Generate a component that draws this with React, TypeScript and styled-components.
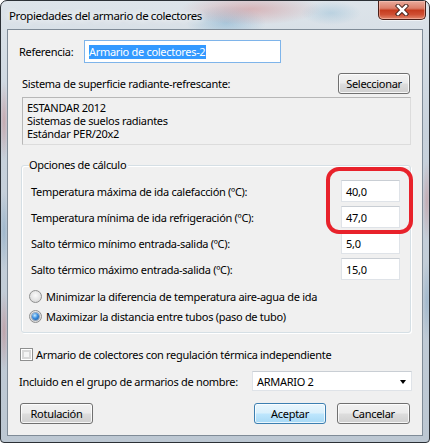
import React from 'react';
import styled, { createGlobalStyle, css } from 'styled-components';

const FONT = '"Noto Sans", "Open Sans", sans-serif';
const FS = '11px';
const LS = '-0.3px';

const Global = createGlobalStyle`
  html, body { margin: 0; padding: 0; background: #ffffff; }
  body {
    width: 430px; height: 443px; overflow: hidden;
    font-family: ${FONT};
    font-size: ${FS};
    letter-spacing: ${LS};
    color: #000;
  }
  * { box-sizing: border-box; }
`;

const Window = styled.div`
  position: relative;
  width: 430px;
  height: 443px;
  border: 1px solid #2b3036;
  border-radius: 7px 7px 4px 4px;
  padding: 0 6px 6px 6px;
  display: flex;
  flex-direction: column;
  background:
    radial-gradient(ellipse 70px 16px at 250px 8px, rgba(205, 95, 95, 0.35), transparent),
    radial-gradient(ellipse 40px 18px at 225px 22px, rgba(80, 150, 195, 0.35), transparent),
    radial-gradient(ellipse 30px 12px at 330px 12px, rgba(90, 160, 200, 0.25), transparent),
    radial-gradient(ellipse 5px 40px at 3px 120px, rgba(190, 90, 90, 0.35), transparent),
    radial-gradient(ellipse 5px 40px at 3px 230px, rgba(90, 140, 180, 0.35), transparent),
    radial-gradient(ellipse 5px 40px at 3px 330px, rgba(190, 90, 90, 0.35), transparent),
    radial-gradient(ellipse 5px 40px at 426px 200px, rgba(190, 90, 90, 0.3), transparent),
    radial-gradient(ellipse 5px 40px at 426px 300px, rgba(90, 140, 180, 0.3), transparent),
    linear-gradient(180deg, #dde4ea 0%, #c8d2dc 30%, #bcc7d2 100%);
`;

const TitleBar = styled.div`
  height: 28px;
  display: flex;
  align-items: flex-start;
  justify-content: space-between;
  padding-left: 2px;
`;

const Title = styled.div`
  font-family: ${FONT};
  font-size: 11.5px;
  letter-spacing: -0.4px;
  line-height: 16px;
  margin-top: 7px;
  color: #000;
  text-shadow: 0 0 6px rgba(255, 255, 255, 0.95), 0 0 10px rgba(255, 255, 255, 0.8);
`;

const CloseButton = styled.div`
  width: 48px;
  height: 19px;
  margin-right: -3px;
  border: 1px solid #4a1f18;
  border-top: none;
  border-radius: 0 0 5px 5px;
  box-shadow: 0 1px 0 rgba(255, 255, 255, 0.6), inset 0 0 0 1px rgba(255, 210, 200, 0.45);
  background: linear-gradient(180deg, #e9ab9c 0%, #dc7f6a 40%, #c53c1f 52%, #cf4f33 75%, #e2876c 100%);
  display: flex;
  align-items: center;
  justify-content: center;
`;

const Client = styled.div`
  flex: 1;
  background: #f0f0f0;
  border: 1px solid #7f8b97;
  display: flex;
  flex-direction: column;
  position: relative;
`;

const Label = styled.span<{ $w?: number }>`
  font-family: ${FONT};
  font-size: ${FS};
  letter-spacing: ${LS};
  white-space: nowrap;
  ${(p) => p.$w !== undefined && css`width: ${p.$w}px; flex: none;`}
`;

const RefRow = styled.div`
  display: flex;
  align-items: center;
  margin-top: 10px;
  padding-left: 11px;
  height: 23px;
`;

const TextBox = styled.div<{ $focus?: boolean; $w: number; $h?: number }>`
  width: ${(p) => p.$w}px;
  height: ${(p) => p.$h ?? 22}px;
  background: #fff;
  border: 1px solid ${(p) => (p.$focus ? '#7eb4ea' : '#dfe3e8')};
  ${(p) => !p.$focus && css`border-top-color: #c9ced4;`}
  display: flex;
  align-items: center;
  padding-left: 4px;
  font-family: ${FONT};
  font-size: ${FS};
  flex: none;
`;

const Selected = styled.span`
  background: #3399ff;
  color: #fff;
  line-height: 14px;
  padding: 0 1px 0 0;
`;

const SistemaRow = styled.div`
  display: flex;
  align-items: center;
  justify-content: space-between;
  margin-top: 10px;
  padding: 0 12px 0 14px;
  height: 21px;
`;

const Button = styled.div<{ $default?: boolean; $w: number }>`
  width: ${(p) => p.$w}px;
  height: 21px;
  flex: none;
  border-radius: 3px;
  border: 1px solid ${(p) => (p.$default ? '#3c7fb1' : '#707070')};
  box-shadow: inset 0 0 0 1px ${(p) => (p.$default ? 'rgba(255,255,255,0.75)' : 'rgba(255,255,255,0.8)')};
  background: ${(p) =>
    p.$default
      ? 'linear-gradient(180deg, #eaf6fd 0%, #d9f0fc 48%, #bee6fd 52%, #a7d9f5 100%)'
      : 'linear-gradient(180deg, #f2f2f2 0%, #ebebeb 48%, #dddddd 52%, #cfcfcf 100%)'};
  display: flex;
  align-items: center;
  justify-content: center;
  font-family: ${FONT};
  font-size: ${FS};
  color: #000;
`;

const InfoBox = styled.div`
  margin: 3px 11px 0 14px;
  height: 48px;
  border: 1px solid #b7b7b7;
  border-right-color: #dcdcdc;
  border-bottom-color: #dcdcdc;
  padding: 3px 4px;
  display: flex;
  flex-direction: column;
`;

const InfoLine = styled.div`
  font-family: ${FONT};
  font-size: ${FS};
  line-height: 13px;
  white-space: nowrap;
`;

const Group = styled.div`
  margin: 20px 11px 0 13px;
  height: 168px;
  border: 1px solid #d5dfe5;
  border-radius: 3px;
  box-shadow: inset 1px 1px 0 #ffffff, 1px 1px 0 #ffffff;
  display: flex;
  flex-direction: column;
  padding: 0 10px 0 7px;
`;

const Legend = styled.div`
  align-self: flex-start;
  margin-top: -9px;
  padding: 0 2px 0 0;
  background: #f0f0f0;
  font-family: ${FONT};
  font-size: ${FS};
  line-height: 16px;
`;

const ValueRows = styled.div`
  display: flex;
  flex-direction: column;
  gap: 4px;
  margin-top: 7px;
`;

const ValueRow = styled.div`
  display: flex;
  align-items: center;
  justify-content: space-between;
  height: 22px;
  padding-left: 2px;
`;

const Options = styled.div`
  display: flex;
  flex-direction: column;
  gap: 7px;
  margin-top: 10px;
`;

const OptionRow = styled.div`
  display: flex;
  align-items: center;
  gap: 4px;
  height: 13px;
`;

const Radio = styled.span<{ $checked?: boolean }>`
  width: 13px;
  height: 13px;
  flex: none;
  border-radius: 50%;
  border: 1px solid #8e8f8f;
  background: radial-gradient(circle at 50% 40%, #fafafa 0%, #e4e4e4 55%, #cfcfcf 100%);
  display: flex;
  align-items: center;
  justify-content: center;
  &::after {
    content: '';
    display: ${(p) => (p.$checked ? 'block' : 'none')};
    width: 7px;
    height: 7px;
    border-radius: 50%;
    background: radial-gradient(circle at 40% 35%, #c8ecff 0%, #3b8ee0 45%, #0f4a8f 100%);
    box-shadow: 0 0 0 1px rgba(20, 60, 110, 0.4);
  }
`;

const CheckRow = styled.div`
  display: flex;
  align-items: center;
  gap: 3px;
  margin: 15px 0 0 12px;
  height: 13px;
`;

const CheckBox = styled.span`
  width: 13px;
  height: 13px;
  flex: none;
  border: 1px solid #8e8f8f;
  background: #f4f4f4;
  box-shadow: inset 0 0 0 1px #fff, inset 0 0 0 3px #d8d8d8;
`;

const ComboRow = styled.div`
  display: flex;
  align-items: center;
  justify-content: space-between;
  margin: 10px 10px 0 11px;
  height: 20px;
`;

const Combo = styled.div`
  width: 160px;
  height: 20px;
  background: #fff;
  border: 1px solid #dfe3e8;
  border-top-color: #c9ced4;
  display: flex;
  align-items: center;
  justify-content: space-between;
  padding: 0 5px 0 4px;
  font-family: ${FONT};
  font-size: ${FS};
`;

const Arrow = styled.span`
  width: 0;
  height: 0;
  border-left: 3.5px solid transparent;
  border-right: 3.5px solid transparent;
  border-top: 4px solid #000;
  margin-top: 1px;
`;

const ButtonRow = styled.div`
  display: flex;
  align-items: center;
  margin: 12px 12px 0 12px;
  height: 21px;
`;

const Spacer = styled.div`
  flex: 1;
`;

const RightButtons = styled.div`
  display: flex;
  gap: 11px;
`;

const Annotation = styled.div`
  position: absolute;
  left: 325px;
  top: 166px;
  width: 87px;
  height: 67px;
  border: 4px solid #e8222b;
  border-radius: 13px;
  pointer-events: none;
`;

const CloseIcon = () => (
  <svg width="14" height="12" viewBox="0 0 14 12">
    <path d="M3 2 L11 10 M11 2 L3 10" stroke="#3a1a14" strokeWidth="4.4" strokeLinecap="square" />
    <path d="M3 2 L11 10 M11 2 L3 10" stroke="#ffffff" strokeWidth="2.6" strokeLinecap="square" />
  </svg>
);

const values: { label: string; value: string }[] = [
  { label: 'Temperatura máxima de ida calefacción (ºC):', value: '40,0' },
  { label: 'Temperatura mínima de ida refrigeración (ºC):', value: '47,0' },
  { label: 'Salto térmico mínimo entrada-salida (ºC):', value: '5,0' },
  { label: 'Salto térmico máximo entrada-salida (ºC):', value: '15,0' },
];

export default function App() {
  return (
    <>
      <Global />
      <Window>
        <TitleBar>
          <Title>Propiedades del armario de colectores</Title>
          <CloseButton>
            <CloseIcon />
          </CloseButton>
        </TitleBar>
        <Client>
          <RefRow>
            <Label $w={65}>Referencia:</Label>
            <TextBox $focus $w={197} $h={23}>
              <Selected>Armario de colectores-2</Selected>
            </TextBox>
          </RefRow>
          <SistemaRow>
            <Label>Sistema de superficie radiante-refrescante:</Label>
            <Button $w={72}>Seleccionar</Button>
          </SistemaRow>
          <InfoBox>
            <InfoLine>ESTANDAR 2012</InfoLine>
            <InfoLine>Sistemas de suelos radiantes</InfoLine>
            <InfoLine>Estándar PER/20x2</InfoLine>
          </InfoBox>
          <Group>
            <Legend>Opciones de cálculo</Legend>
            <ValueRows>
              {values.map((v) => (
                <ValueRow key={v.label}>
                  <Label>{v.label}</Label>
                  <TextBox $w={59}>{v.value}</TextBox>
                </ValueRow>
              ))}
            </ValueRows>
            <Options>
              <OptionRow>
                <Radio />
                <Label>Minimizar la diferencia de temperatura aire-agua de ida</Label>
              </OptionRow>
              <OptionRow>
                <Radio $checked />
                <Label>Maximizar la distancia entre tubos (paso de tubo)</Label>
              </OptionRow>
            </Options>
          </Group>
          <CheckRow>
            <CheckBox />
            <Label>Armario de colectores con regulación térmica independiente</Label>
          </CheckRow>
          <ComboRow>
            <Label>Incluido en el grupo de armarios de nombre:</Label>
            <Combo>
              <span>ARMARIO 2</span>
              <Arrow />
            </Combo>
          </ComboRow>
          <ButtonRow>
            <Button $w={73}>Rotulación</Button>
            <Spacer />
            <RightButtons>
              <Button $default $w={72}>Aceptar</Button>
              <Button $w={73}>Cancelar</Button>
            </RightButtons>
          </ButtonRow>
        </Client>
        <Annotation />
      </Window>
    </>
  );
}
